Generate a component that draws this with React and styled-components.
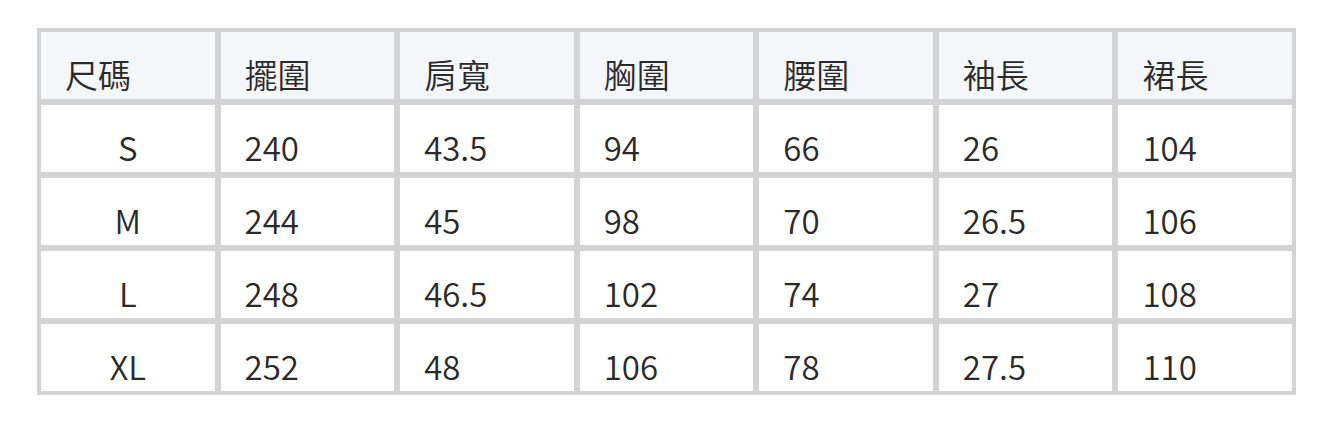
import React from 'react';
import styled, { createGlobalStyle } from 'styled-components';

const GlobalStyle = createGlobalStyle`
	html, body {
		margin: 0;
		padding: 0;
		background: #ffffff;
	}
	body {
		font-family: "Noto Sans CJK TC", "Noto Sans", sans-serif;
		color: #333333;
	}
`;

const Page = styled.div`
	padding: 28px 0 0 37px;
`;

const SizeTable = styled.div`
	display: grid;
	grid-template-columns: repeat(7, 1fr);
	grid-auto-rows: 67px;
	gap: 6px;
	width: 1259px;
	box-sizing: border-box;
	padding: 4px;
	background: #d3d3d3;
`;

const Cell = styled.div`
	box-sizing: border-box;
	padding: 19px 0 0 ${(p) => (p.$center ? '0' : '24px')};
	background: ${(p) => (p.$head ? '#f5f6fa' : '#ffffff')};
	text-align: ${(p) => (p.$center ? 'center' : 'left')};
	font-size: 33px;
	font-weight: 350;
	line-height: 46px;
	color: #2a2a2a;
	white-space: nowrap;
`;

const headers = ['尺碼', '擺圍', '肩寬', '胸圍', '腰圍', '袖長', '裙長'];

const rows = [
	['S', '240', '43.5', '94', '66', '26', '104'],
	['M', '244', '45', '98', '70', '26.5', '106'],
	['L', '248', '46.5', '102', '74', '27', '108'],
	['XL', '252', '48', '106', '78', '27.5', '110'],
];

export default function App() {
	return (
		<Page>
			<GlobalStyle />
			<SizeTable>
				{headers.map((h) => (
					<Cell key={h} $head>
						{h}
					</Cell>
				))}
				{rows.map((row) =>
					row.map((value, i) => (
						<Cell key={row[0] + i} $center={i === 0}>
							{value}
						</Cell>
					))
				)}
			</SizeTable>
		</Page>
	);
}
